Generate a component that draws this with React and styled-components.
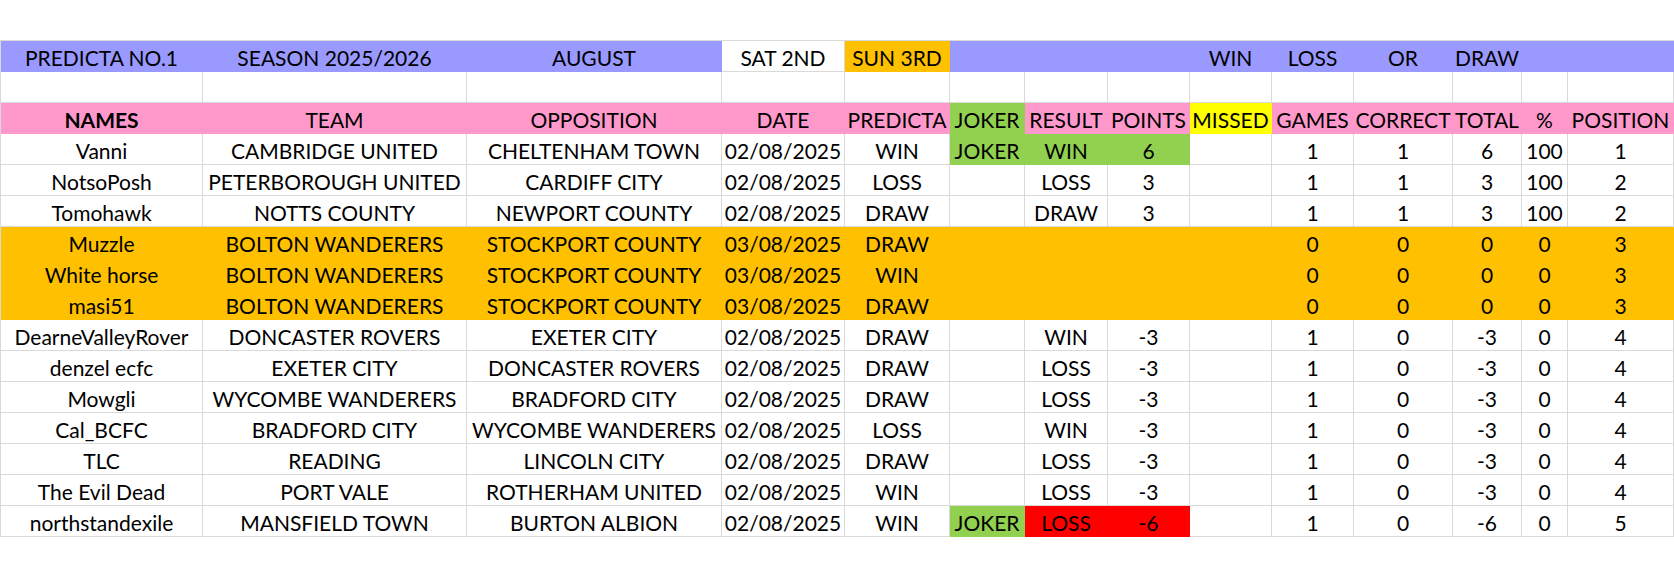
import React from "react";
import styled, { createGlobalStyle } from "styled-components";

const GRID = "#d9d9d9";
const PURPLE = "#9999ff";
const ORANGE = "#ffc000";
const PINK = "#ff99cc";
const GREEN = "#92d050";
const YELLOW = "#ffff00";
const RED = "#ff0000";

// column widths incl. the right gridline
const COLS = [202, 264, 255, 123, 105, 75, 83, 82, 82, 82, 99, 69, 46, 106];

const GlobalStyle = createGlobalStyle`
  html, body {
    margin: 0;
    padding: 0;
    background: #fff;
    overflow: hidden;
  }
  body {
    font-family: Lato, "Liberation Sans", sans-serif;
    color: #000;
  }
`;

const Page = styled.div`
  padding-top: 40px;
`;

const Sheet = styled.div`
  display: grid;
  grid-template-columns: ${COLS.map((w) => w + "px").join(" ")};
  grid-auto-rows: 31px;
  width: max-content;
  border-top: 1px solid ${GRID};
  border-left: 1px solid ${GRID};
`;

const Cell = styled.div`
  box-sizing: border-box;
  height: 31px;
  padding-top: 2px;
  line-height: 29px;
  font-size: 21px;
  font-weight: ${(p) => (p.$bold ? 700 : 400)};
  text-align: center;
  white-space: nowrap;
  background: ${(p) => p.$fill || "#fff"};
  border-right: 1px solid ${(p) => p.$fill || GRID};
  border-bottom: 1px solid ${(p) => p.$fill || GRID};
`;

const P = PURPLE;
const titleRow = {
  texts: ["PREDICTA NO.1", "SEASON 2025/2026", "AUGUST", "SAT 2ND", "SUN 3RD", "", "", "", "WIN", "LOSS", "OR", "DRAW", "", ""],
  fills: [P, P, P, null, ORANGE, P, P, P, P, P, P, P, P, P],
};

const blankRow = { texts: Array(14).fill(""), fills: [] };

const headRow = {
  texts: ["NAMES", "TEAM", "OPPOSITION", "DATE", "PREDICTA", "JOKER", "RESULT", "POINTS", "MISSED", "GAMES", "CORRECT", "TOTAL", "%", "POSITION"],
  fills: [PINK, PINK, PINK, PINK, PINK, GREEN, PINK, PINK, YELLOW, PINK, PINK, PINK, PINK, PINK],
  bold: [0],
};

const orange = Array(14).fill(ORANGE);

const players = [
  { texts: ["Vanni", "CAMBRIDGE UNITED", "CHELTENHAM TOWN", "02/08/2025", "WIN", "JOKER", "WIN", "6", "", "1", "1", "6", "100", "1"], fills: [null, null, null, null, null, GREEN, GREEN, GREEN] },
  { texts: ["NotsoPosh", "PETERBOROUGH UNITED", "CARDIFF CITY", "02/08/2025", "LOSS", "", "LOSS", "3", "", "1", "1", "3", "100", "2"], fills: [] },
  { texts: ["Tomohawk", "NOTTS COUNTY", "NEWPORT COUNTY", "02/08/2025", "DRAW", "", "DRAW", "3", "", "1", "1", "3", "100", "2"], fills: [] },
  { texts: ["Muzzle", "BOLTON WANDERERS", "STOCKPORT COUNTY", "03/08/2025", "DRAW", "", "", "", "", "0", "0", "0", "0", "3"], fills: orange },
  { texts: ["White horse", "BOLTON WANDERERS", "STOCKPORT COUNTY", "03/08/2025", "WIN", "", "", "", "", "0", "0", "0", "0", "3"], fills: orange },
  { texts: ["masi51", "BOLTON WANDERERS", "STOCKPORT COUNTY", "03/08/2025", "DRAW", "", "", "", "", "0", "0", "0", "0", "3"], fills: orange },
  { texts: ["DearneValleyRover", "DONCASTER ROVERS", "EXETER CITY", "02/08/2025", "DRAW", "", "WIN", "-3", "", "1", "0", "-3", "0", "4"], fills: [] },
  { texts: ["denzel ecfc", "EXETER CITY", "DONCASTER ROVERS", "02/08/2025", "DRAW", "", "LOSS", "-3", "", "1", "0", "-3", "0", "4"], fills: [] },
  { texts: ["Mowgli", "WYCOMBE WANDERERS", "BRADFORD CITY", "02/08/2025", "DRAW", "", "LOSS", "-3", "", "1", "0", "-3", "0", "4"], fills: [] },
  { texts: ["Cal_BCFC", "BRADFORD CITY", "WYCOMBE WANDERERS", "02/08/2025", "LOSS", "", "WIN", "-3", "", "1", "0", "-3", "0", "4"], fills: [] },
  { texts: ["TLC", "READING", "LINCOLN CITY", "02/08/2025", "DRAW", "", "LOSS", "-3", "", "1", "0", "-3", "0", "4"], fills: [] },
  { texts: ["The Evil Dead", "PORT VALE", "ROTHERHAM UNITED", "02/08/2025", "WIN", "", "LOSS", "-3", "", "1", "0", "-3", "0", "4"], fills: [] },
  { texts: ["northstandexile", "MANSFIELD TOWN", "BURTON ALBION", "02/08/2025", "WIN", "JOKER", "LOSS", "-6", "", "1", "0", "-6", "0", "5"], fills: [null, null, null, null, null, GREEN, RED, RED] },
];

const rows = [titleRow, blankRow, headRow, ...players];

const App = () => {
  return (
    <Page>
      <GlobalStyle />
      <Sheet>
        {rows.map((row, r) =>
          row.texts.map((text, c) => (
            <Cell
              key={r + "-" + c}
              $fill={row.fills[c]}
              $bold={row.bold && row.bold.includes(c)}
            >
              {text}
            </Cell>
          ))
        )}
      </Sheet>
    </Page>
  );
};

export default App;
